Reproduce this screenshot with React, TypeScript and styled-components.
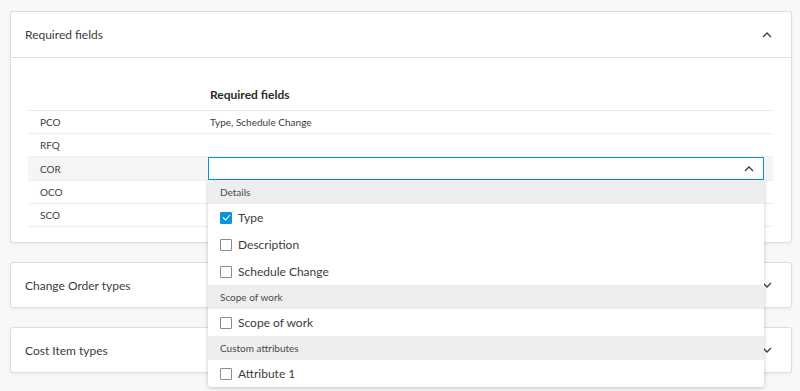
import React from 'react';
import styled, { createGlobalStyle } from 'styled-components';

const GlobalStyle = createGlobalStyle`
    html, body {
        margin: 0;
        padding: 0;
        background: #f8f8f8;
        font-family: Lato, "Open Sans", sans-serif;
        color: #3c3c3c;
    }
`;

const Page = styled.div`
    display: flex;
    flex-direction: column;
    gap: 19px;
    padding: 11px 8px 20px 10px;
`;

const Card = styled.div`
    background: #ffffff;
    border: 1px solid #dedede;
    border-radius: 3px;
    box-shadow: 0 1px 3px rgba(0, 0, 0, 0.06);
`;

const CardHeader = styled.div<{ $open?: boolean }>`
    display: flex;
    align-items: center;
    justify-content: space-between;
    height: ${(p) => (p.$open ? 45 : 44)}px;
    padding: 0 19px 0 14px;
    border-bottom: ${(p) => (p.$open ? '1px solid #e1e1e1' : 'none')};
    font-size: 12px;
    color: #3c3c3c;
`;

const CardBody = styled.div`
    padding: 21px 18px 15px 17px;
`;

const Table = styled.table`
    width: 100%;
    border-collapse: collapse;
    font-size: 10px;
    color: #3c3c3c;

    & th {
        height: 31px;
        text-align: left;
        font-size: 12px;
        font-weight: 700;
        color: #2b2b2b;
        padding: 0 2px;
        border-bottom: 1px solid #e8e8e8;
    }

    & th:first-child {
        width: 176px;
    }

    & td {
        height: 22px;
        padding: 0 0 0 12px;
        border-bottom: 1px solid #eeeeee;
    }

    & td + td {
        padding: 0 9px 0 2px;
    }
`;

const Row = styled.tr<{ $active?: boolean }>`
    background: ${(p) => (p.$active ? '#f5f5f5' : 'transparent')};
`;

const SelectCell = styled.td`
    position: relative;
    && {
        padding: 0 9px 0 0;
    }
`;

const SelectBox = styled.div`
    display: flex;
    align-items: center;
    justify-content: flex-end;
    height: 21px;
    padding-right: 9px;
    background: #ffffff;
    border: 1px solid #0696d7;
`;

const Menu = styled.div`
    position: absolute;
    top: 100%;
    left: 0;
    right: 9px;
    z-index: 2;
    background: #ffffff;
    border-radius: 0 0 3px 3px;
    box-shadow: 0 1px 4px rgba(0, 0, 0, 0.22);
`;

const Group = styled.div`
    height: 24px;
    display: flex;
    align-items: center;
    padding-left: 12px;
    background: #eeeeee;
    font-size: 10px;
    color: #4a4a4a;
`;

const Option = styled.label`
    height: 27px;
    display: flex;
    align-items: center;
    gap: 6px;
    padding-left: 12px;
    font-size: 12px;
    color: #3c3c3c;
`;

const Box = styled.span<{ $checked?: boolean }>`
    width: 12px;
    height: 12px;
    box-sizing: border-box;
    display: flex;
    align-items: center;
    justify-content: center;
    border: 1px solid ${(p) => (p.$checked ? '#0696d7' : '#8a8a8a')};
    border-radius: 1px;
    background: ${(p) => (p.$checked ? '#0696d7' : '#ffffff')};
`;

function Chevron({ up }: { up?: boolean }) {
    return (
        <svg width="10" height="6" viewBox="0 0 10 6">
            <path
                d={up ? 'M1 5 L5 1 L9 5' : 'M1 1 L5 5 L9 1'}
                fill="none"
                stroke="#3c3c3c"
                strokeWidth="1.3"
            />
        </svg>
    );
}

function Check({ checked, label }: { checked?: boolean; label: string }) {
    return (
        <Option>
            <Box $checked={checked}>
                {checked && (
                    <svg width="9" height="7" viewBox="0 0 9 7">
                        <path d="M1 3.5 L3.5 6 L8 1" fill="none" stroke="#ffffff" strokeWidth="1.1" />
                    </svg>
                )}
            </Box>
            {label}
        </Option>
    );
}

const rows = [
    { code: 'PCO', value: 'Type, Schedule Change' },
    { code: 'RFQ', value: '' },
    { code: 'COR', value: '', active: true },
    { code: 'OCO', value: '' },
    { code: 'SCO', value: '' },
];

export default function App() {
    return (
        <>
            <GlobalStyle />
            <Page>
                <Card>
                    <CardHeader $open>
                        <span>Required fields</span>
                        <Chevron up />
                    </CardHeader>
                    <CardBody>
                        <Table>
                            <thead>
                                <tr>
                                    <th></th>
                                    <th>Required fields</th>
                                </tr>
                            </thead>
                            <tbody>
                                {rows.map((r) => (
                                    <Row key={r.code} $active={r.active}>
                                        <td>{r.code}</td>
                                        {r.active ? (
                                            <SelectCell>
                                                <SelectBox>
                                                    <Chevron up />
                                                </SelectBox>
                                                <Menu>
                                                    <Group>Details</Group>
                                                    <Check checked label="Type" />
                                                    <Check label="Description" />
                                                    <Check label="Schedule Change" />
                                                    <Group>Scope of work</Group>
                                                    <Check label="Scope of work" />
                                                    <Group>Custom attributes</Group>
                                                    <Check label="Attribute 1" />
                                                </Menu>
                                            </SelectCell>
                                        ) : (
                                            <td>{r.value}</td>
                                        )}
                                    </Row>
                                ))}
                            </tbody>
                        </Table>
                    </CardBody>
                </Card>
                <Card>
                    <CardHeader>
                        <span>Change Order types</span>
                        <Chevron />
                    </CardHeader>
                </Card>
                <Card>
                    <CardHeader>
                        <span>Cost Item types</span>
                        <Chevron />
                    </CardHeader>
                </Card>
            </Page>
        </>
    );
}
